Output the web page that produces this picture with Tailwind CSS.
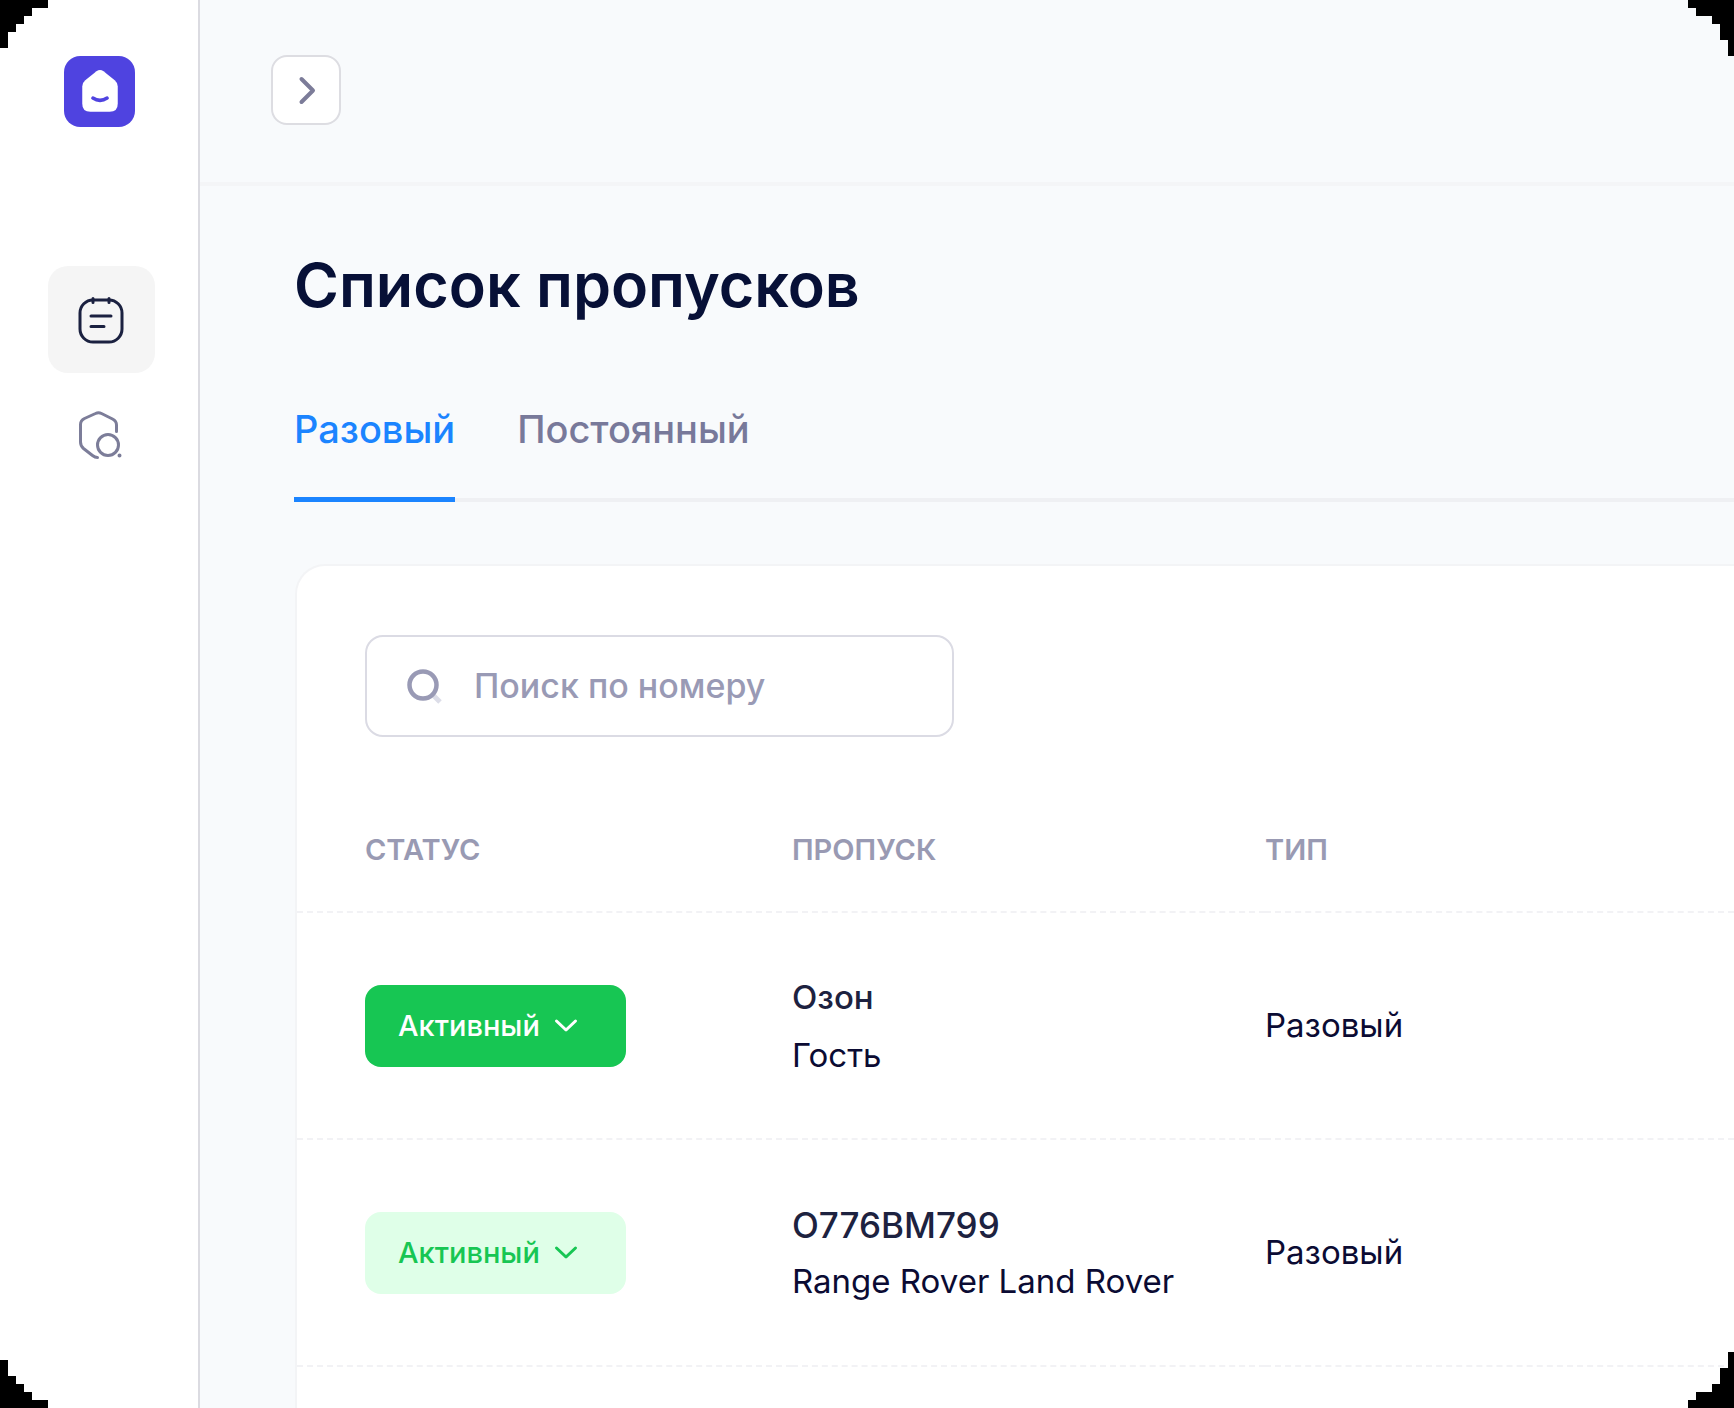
<!DOCTYPE html>
<html lang="ru">
<head>
<meta charset="utf-8">
<meta name="viewport" content="width=device-width, initial-scale=1">
<title>Список пропусков</title>
<script src="https://cdn.jsdelivr.net/npm/@tailwindcss/browser@4"></script>
</head>
<body class="relative flex h-screen overflow-hidden bg-[#f8fafc] font-['Inter',sans-serif] text-[#0b0b33]">

<aside class="flex w-[200px] shrink-0 flex-col items-center border-r-2 border-[#dbdbe1] bg-white pt-14">
  <a href="#" aria-label="Главная" class="block size-[71px]">
    <svg viewBox="0 0 70 70" class="size-full">
      <rect width="70" height="70" rx="16" fill="#4f43e0"/>
      <path d="M32 15q3.500-2.500 7 0l11 9q3 2.500 3 6v17q0 8-8 8H26q-8 0-8-8V30q0-3.500 3-6z" fill="#fff"/>
      <path d="M28.500 41.500q7 4.500 14 0" fill="none" stroke="#4f43e0" stroke-width="3.500" stroke-linecap="round"/>
    </svg>
  </a>
  <nav class="mt-[139px] flex flex-col items-center gap-2 pl-1" aria-label="Меню">
    <a href="#" aria-label="Пропуска" aria-current="page" class="flex size-[107px] items-center justify-center rounded-[20px] bg-[#f5f5f5] text-[#1b2140]">
      <svg viewBox="0 0 48 48" class="size-12" fill="none" stroke="currentColor" stroke-width="3" stroke-linecap="round">
        <rect x="3" y="4" width="42" height="42" rx="13"/>
        <path d="M16 2.500v4M32 2.500v4M14 20h20M14 30.500h13"/>
      </svg>
    </a>
    <a href="#" aria-label="Проверка" class="flex size-[107px] items-center justify-center text-[#7c7d99]">
      <svg viewBox="0 0 48 48" class="size-12" fill="none" stroke="currentColor" stroke-width="3" stroke-linecap="round" stroke-linejoin="round">
        <path d="M39.500 20.500V14q0-4-4-6L24.500 2.500q-3-1.500-6 0L7.500 7.500q-4 2-4 6V31q0 4 3 6.500l9 7q2.500 2 5 2"/>
        <circle cx="31" cy="34" r="10.500"/>
        <circle cx="42.500" cy="44.500" r="1" fill="currentColor" stroke-width="2"/>
      </svg>
    </a>
  </nav>
</aside>

<div class="flex min-w-0 flex-1 flex-col">
  <header class="flex h-[186px] shrink-0 items-start border-b-4 border-[#f4f5f7] pt-[55px] pl-[71px]">
    <button type="button" aria-label="Развернуть меню" class="flex size-[70px] items-center justify-center rounded-2xl border-2 border-[#dddde2] bg-white text-[#7c7c99]">
      <svg viewBox="0 0 32 32" class="size-8" fill="none" stroke="currentColor" stroke-width="4" stroke-linecap="round" stroke-linejoin="round"><path d="M11.500 5l11.500 11.500-11.500 11.500"/></svg>
    </button>
  </header>

  <main class="flex min-h-0 flex-1 flex-col pl-[94px]">
    <h1 class="mt-[63px] text-[61px] leading-[72px] font-semibold text-[#071037]">Список пропусков</h1>

    <nav class="mt-[76px] flex h-[105px] shrink-0 gap-[62px] border-b-4 border-[#eff0f3] text-[38px] leading-[64px] font-medium" aria-label="Вид пропуска">
      <a href="#" aria-current="page" class="-mb-1 border-b-5 border-[#1b84ff] text-[#1b84ff]">Разовый</a>
      <a href="#" class="text-[#78799a]">Постоянный</a>
    </nav>

    <section class="mt-[62px] ml-px flex-1 overflow-hidden rounded-tl-[30px] border-t-2 border-l-2 border-[#f3f4f6] bg-white pt-[69px]">
      <label class="ml-[68px] flex h-[102px] w-[589px] items-center gap-8 rounded-[18px] border-2 border-[#dbdbe4] pr-6 pl-[39px]">
        <svg viewBox="0 0 36 36" class="size-9 shrink-0" fill="none">
          <path d="M28 28l6 6" stroke="#dcdde8" stroke-width="5"/>
          <circle cx="17" cy="17" r="13.500" stroke="#999ab5" stroke-width="4.500"/>
        </svg>
        <input type="search" aria-label="Поиск по номеру" placeholder="Поиск по номеру" class="w-full min-w-0 bg-transparent text-[34px] leading-10 font-medium outline-none placeholder:text-[#999ab5]">
      </label>

      <table class="mt-[68px] w-full table-fixed border-separate border-spacing-0 text-left">
        <colgroup><col class="w-[495px]"><col class="w-[473px]"><col></colgroup>
        <thead>
          <tr class="h-[108px] text-[29px] leading-9 text-[#999ab3] *:border-b-2 *:border-dashed *:border-[#f2f2f5] *:pb-4 *:font-semibold">
            <th scope="col" class="pl-[68px]">СТАТУС</th>
            <th scope="col">ПРОПУСК</th>
            <th scope="col">ТИП</th>
          </tr>
        </thead>
        <tbody class="text-[33px]">
          <tr class="h-[227px] *:border-b-2 *:border-dashed *:border-[#f2f2f5]">
            <td class="pl-[68px]">
              <div class="relative h-[82px] w-[261px] text-white">
                <select aria-label="Статус пропуска Озон" class="size-full appearance-none rounded-2xl bg-[#17c653] pl-[33px] text-[29px] font-medium outline-none"><option>Активный</option></select>
                <svg viewBox="0 0 24 24" class="pointer-events-none absolute top-7 left-[189px] size-6" fill="none" stroke="currentColor" stroke-width="3" stroke-linecap="round" stroke-linejoin="round"><path d="M2.500 8l9.500 9 9.500-9"/></svg>
              </div>
            </td>
            <td>
              <p class="leading-[58px] font-medium text-[#1d2240]">Озон</p>
              <p class="leading-[58px]">Гость</p>
            </td>
            <td>Разовый</td>
          </tr>
          <tr class="h-[227px] *:border-b-2 *:border-dashed *:border-[#f2f2f5]">
            <td class="pl-[68px]">
              <div class="relative h-[82px] w-[261px] text-[#17c653]">
                <select aria-label="Статус пропуска O776BM799" class="size-full appearance-none rounded-2xl bg-[#dfffe8] pl-[33px] text-[29px] font-medium outline-none"><option>Активный</option></select>
                <svg viewBox="0 0 24 24" class="pointer-events-none absolute top-7 left-[189px] size-6" fill="none" stroke="currentColor" stroke-width="3" stroke-linecap="round" stroke-linejoin="round"><path d="M2.500 8l9.500 9 9.500-9"/></svg>
              </div>
            </td>
            <td>
              <p class="text-[35px] leading-[56px] font-medium text-[#1d2240]">O776BM799</p>
              <p class="leading-[56px]">Range Rover Land Rover</p>
            </td>
            <td>Разовый</td>
          </tr>
        </tbody>
      </table>
    </section>
  </main>
</div>

<!-- Stepped black corners of the window -->
<svg class="pointer-events-none absolute top-0 left-0 h-12 w-12" viewBox="0 0 48 48" shape-rendering="crispEdges" aria-hidden="true"><path d="M0 0H48V8H32V16H24V24H16V32H8V48H0z"/></svg>
<svg class="pointer-events-none absolute top-0 right-0 h-14 w-[46px]" viewBox="0 0 46 56" shape-rendering="crispEdges" aria-hidden="true"><path d="M46 0H0V8H8V16H24V24H32V40H40V56H46z"/></svg>
<svg class="pointer-events-none absolute bottom-0 left-0 h-12 w-12" viewBox="0 0 48 48" shape-rendering="crispEdges" aria-hidden="true"><path d="M0 48H48V40H32V32H24V24H16V16H8V0H0z"/></svg>
<svg class="pointer-events-none absolute right-0 bottom-0 h-14 w-[46px]" viewBox="0 0 46 56" shape-rendering="crispEdges" aria-hidden="true"><path d="M46 56H0V48H8V40H24V32H32V16H40V0H46z"/></svg>
</body>
</html>
